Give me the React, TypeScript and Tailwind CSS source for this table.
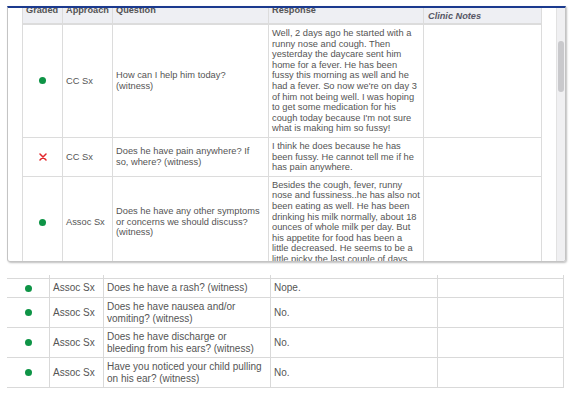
import React from 'react';

type Grade = 'pass' | 'fail';

interface Row {
  grade: Grade;
  approach: string;
  question: string;
  response: string;
}

const topRows: Row[] = [
  {
    grade: 'pass',
    approach: 'CC Sx',
    question: 'How can I help him today? (witness)',
    response:
      "Well, 2 days ago he started with a runny nose and cough. Then yesterday the daycare sent him home for a fever. He has been fussy this morning as well and he had a fever. So now we're on day 3 of him not being well. I was hoping to get some medication for his cough today because I'm not sure what is making him so fussy!",
  },
  {
    grade: 'fail',
    approach: 'CC Sx',
    question: 'Does he have pain anywhere? If so, where? (witness)',
    response: 'I think he does because he has been fussy. He cannot tell me if he has pain anywhere.',
  },
  {
    grade: 'pass',
    approach: 'Assoc Sx',
    question: 'Does he have any other symptoms or concerns we should discuss? (witness)',
    response:
      'Besides the cough, fever, runny nose and fussiness..he has also not been eating as well. He has been drinking his milk normally, about 18 ounces of whole milk per day. But his appetite for food has been a little decreased. He seems to be a little picky the last couple of days.',
  },
];

const bottomRows: Row[] = [
  { grade: 'pass', approach: 'Assoc Sx', question: 'Does he have a rash? (witness)', response: 'Nope.' },
  { grade: 'pass', approach: 'Assoc Sx', question: 'Does he have nausea and/or vomiting? (witness)', response: 'No.' },
  { grade: 'pass', approach: 'Assoc Sx', question: 'Does he have discharge or bleeding from his ears? (witness)', response: 'No.' },
  { grade: 'pass', approach: 'Assoc Sx', question: 'Have you noticed your child pulling on his ear? (witness)', response: 'No.' },
];

function GradeMark({ grade }: { grade: Grade }) {
  if (grade === 'pass') {
    return <span className="block w-[7px] h-[7px] rounded-full bg-[#0e9446]" />;
  }
  return (
    <svg width="8" height="8" viewBox="0 0 8 8" className="block">
      <path d="M1 1L7 7M7 1L1 7" stroke="#e3262b" strokeWidth="1.5" strokeLinecap="round" />
    </svg>
  );
}

const topCell = 'border-r border-b border-[#dcdcdc] flex items-center py-[3px]';
const botCell = 'border-r border-b border-[#d9d9d9] flex items-center px-[3px]';

export default function App() {
  return (
    <div className="w-[584px] h-[399px] bg-white text-[#555555] font-['Liberation_Sans',Arial,sans-serif] overflow-hidden">
      {/* scrolling panel */}
      <div className="mt-[6px] ml-[7px] w-[559px] h-[256px] border-t-2 border-t-[#1b3a8e] border-x border-b border-[#c4c4c4] rounded-b-[3px] shadow-[1px_1px_2px_rgba(0,0,0,0.25)] flex overflow-hidden">
        <div className="flex-1 pl-[14px] overflow-hidden">
          <div className="grid grid-cols-[40px_50px_156px_155px_118px] w-[520px] border-l border-[#dcdcdc]">
            {['Graded', 'Approach', 'Question', 'Response'].map((h) => (
              <div key={h} className="h-[17px] bg-[#eeeff3] border-r border-b-2 border-[#dcdcdc] overflow-hidden px-[3px]">
                <div className="mt-[-3px] text-[9.2px] leading-[10px] font-bold text-[#555555] whitespace-nowrap">{h}</div>
              </div>
            ))}
            <div className="h-[17px] bg-[#eeeff3] border-r border-b-2 border-[#dcdcdc] flex items-center px-[4px]">
              <span className="text-[9.2px] leading-[10px] font-bold italic text-[#575766]">Clinic Notes</span>
            </div>

            {topRows.map((r, i) => (
              <React.Fragment key={i}>
                <div className={`${topCell} justify-center`}>
                  <GradeMark grade={r.grade} />
                </div>
                <div className={`${topCell} px-[3px] text-[9.3px] leading-[10.6px]`}>{r.approach}</div>
                <div className={`${topCell} pl-[3px] pr-[6px] text-[9.3px] leading-[10.6px]`}>{r.question}</div>
                <div className={`${topCell} pl-[3px] pr-[2.5px] text-[9.3px] leading-[10.6px]`}>{r.response}</div>
                <div className={topCell} />
              </React.Fragment>
            ))}
          </div>
        </div>
        {/* scrollbar */}
        <div className="w-[9px] bg-[#f0f0f2] border-l border-[#e2e2e2] pt-[33px]">
          <div className="ml-[1px] w-[6px] h-[51px] rounded-[3px] bg-[#c9c9cc]" />
        </div>
      </div>

      {/* lower table */}
      <div className="mt-[13px] ml-[7px] w-[557px] grid grid-cols-[43px_54px_167px_167px_126px] text-[10px] leading-[12px]">
        {[0, 1, 2, 3, 4].map((c) => (
          <div key={c} className="h-[4px] border-r border-b border-[#d9d9d9]" />
        ))}
        {bottomRows.map((r, i) => (
          <React.Fragment key={i}>
            <div className={`${botCell} justify-center ${i === 0 ? 'h-[19px]' : 'h-[30px]'}`}>
              <GradeMark grade={r.grade} />
            </div>
            <div className={`${botCell} ${i === 0 ? 'h-[19px]' : 'h-[30px]'}`}>{r.approach}</div>
            <div className={`${botCell} ${i === 0 ? 'h-[19px]' : 'h-[30px]'}`}>{r.question}</div>
            <div className={`${botCell} ${i === 0 ? 'h-[19px]' : 'h-[30px]'}`}>{r.response}</div>
            <div className={`${botCell} ${i === 0 ? 'h-[19px]' : 'h-[30px]'}`} />
          </React.Fragment>
        ))}
      </div>
    </div>
  );
}
